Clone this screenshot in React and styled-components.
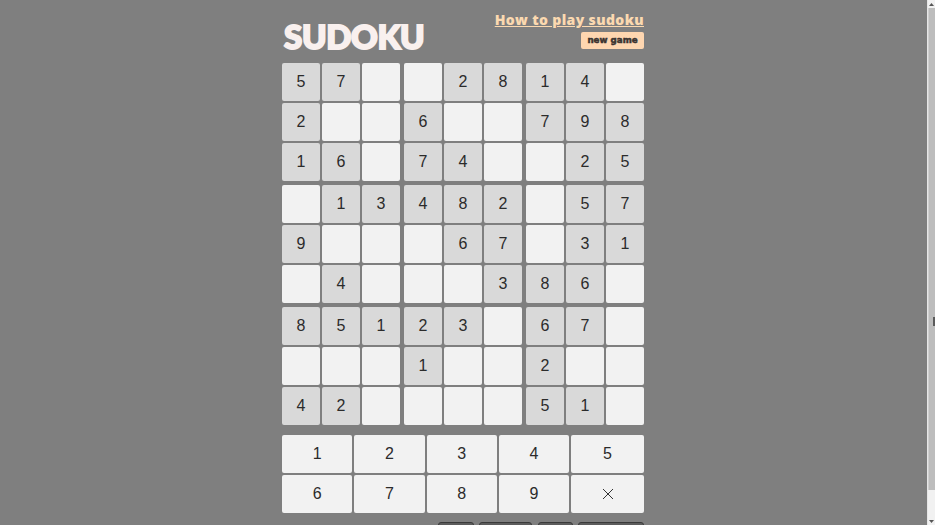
import React from "react";
import styled, { createGlobalStyle } from "styled-components";

const Global = createGlobalStyle`
  html, body { margin: 0; padding: 0; height: 525px; overflow: hidden; background: #7f7f7f; }
  #root { height: 525px; }
`;

const Screen = styled.div`
  display: flex;
  width: 935px;
  height: 525px;
  overflow: hidden;
  background: #7f7f7f;
`;
const Page = styled.main`
  flex: 1;
  display: flex;
  justify-content: center;
  overflow: hidden;
`;
const Column = styled.div`
  width: 362px;
  margin-left: -1px;
  flex-shrink: 0;
`;
const Header = styled.header`
  height: 63px;
  box-sizing: border-box;
  display: flex;
  justify-content: space-between;
  padding-top: 11px;
`;
const Title = styled.h1`
  margin: 10px 0 0 2px;
  font: 900 33px/30px Lato, "Liberation Sans", sans-serif;
  letter-spacing: -0.3px;
  color: #f9f0ee;
  -webkit-text-stroke: 2px #f9f0ee;
`;
const HeaderSide = styled.div`
  display: flex;
  flex-direction: column;
  align-items: flex-end;
  gap: 3px;
`;
const HelpLink = styled.a`
  font: 800 14px/18px "Open Sans", sans-serif;
  letter-spacing: 0.37px;
  color: #fbd9b0;
  text-decoration: underline;
  white-space: nowrap;
`;
const NewGame = styled.button`
  width: 63px;
  height: 17px;
  padding: 0;
  border: 0;
  border-radius: 2px;
  background: #fed6b0;
  color: #3b3330;
  font: 700 8.7px/17px "DejaVu Sans", sans-serif;
  -webkit-text-stroke: 0.5px #3b3330;
`;
const Board = styled.section`
  display: grid;
  grid-template-columns: repeat(3, 118px);
  gap: 4px;
`;
const Box = styled.div`
  display: grid;
  grid-template-columns: repeat(3, 38px);
  grid-auto-rows: 38px;
  gap: 2px;
`;
const Cell = styled.div`
  display: flex;
  align-items: center;
  justify-content: center;
  border-radius: 2px;
  background: ${(p) => (p.$given ? "#d9d9d9" : "#f2f2f2")};
  color: #2b2b2b;
  font: 16px/1 "Liberation Sans", Arial, sans-serif;
`;
const Pad = styled.section`
  margin-top: 10px;
  display: grid;
  grid-template-columns: repeat(4, 70.25px) 1fr;
  grid-auto-rows: 38px;
  gap: 2px;
`;
const PadKey = styled.button`
  display: flex;
  align-items: center;
  justify-content: center;
  padding: 0;
  border: 0;
  border-radius: 2px;
  background: #f2f2f2;
  color: #2b2b2b;
  font: 16px/1 "Liberation Sans", Arial, sans-serif;
`;
const Actions = styled.div`
  margin-top: 9px;
  display: flex;
  justify-content: flex-end;
  gap: 5.5px;
`;
const ActionButton = styled.button`
  width: ${(p) => p.$w}px;
  height: 36px;
  flex-shrink: 0;
  padding: 0;
  border: 1px solid #3a3a3a;
  border-radius: 3px;
  background: #5c5c5c;
`;
const Scrollbar = styled.aside`
  width: 8px;
  flex-shrink: 0;
  box-sizing: border-box;
  border-left: 1px solid #e6e6e6;
  background: #f1f1f1;
  display: flex;
  flex-direction: column;
  position: relative;
`;
const ScrollArrow = styled.div`
  height: 8px;
  flex-shrink: 0;
  display: flex;
  align-items: center;
  justify-content: center;
  svg { display: block; }
`;
const ScrollThumb = styled.div`
  height: 482px;
  background: #bdbdbd;
  border-left: 1px solid #d0d0d0;
`;
const ScrollTrack = styled.div`
  flex: 1;
`;
const ScrollGrip = styled.div`
  position: absolute;
  top: 317px;
  right: 0;
  width: 2px;
  height: 9px;
  background: #5a5a5a;
`;

const boxes = [
  ["57 ", "2  ", "16 "], [" 28", "6  ", "74 "], ["14 ", "798", " 25"],
  [" 13", "9  ", " 4 "], ["482", " 67", "  3"], [" 57", " 31", "86 "],
  ["851", "   ", "42 "], ["23 ", "1  ", "   "], ["67 ", "2  ", "51 "],
];

const CloseGlyph = () => (
  <svg width="12" height="12" viewBox="0 0 12 12" fill="none" stroke="#333" strokeWidth="1">
    <path d="M1 1l10 10M11 1L1 11" />
  </svg>
);

export default function App() {
  return (
    <Screen>
      <Global />
      <Page>
        <Column>
          <Header>
            <Title>SUDOKU</Title>
            <HeaderSide>
              <HelpLink href="#">How to play sudoku</HelpLink>
              <NewGame>new game</NewGame>
            </HeaderSide>
          </Header>
          <Board>
            {boxes.map((rows, b) => (
              <Box key={b}>
                {rows.join("").split("").map((c, i) => (
                  <Cell key={i} $given={c !== " "}>{c.trim()}</Cell>
                ))}
              </Box>
            ))}
          </Board>
          <Pad>
            {[1, 2, 3, 4, 5, 6, 7, 8, 9].map((n) => (
              <PadKey key={n}>{n}</PadKey>
            ))}
            <PadKey aria-label="clear"><CloseGlyph /></PadKey>
          </Pad>
          <Actions>
            <ActionButton $w={36} />
            <ActionButton $w={53} />
            <ActionButton $w={35} />
            <ActionButton $w={66} />
          </Actions>
        </Column>
      </Page>
      <Scrollbar>
        <ScrollArrow>
          <svg width="5" height="3" viewBox="0 0 5 3"><path d="M2.5 0L5 3H0z" fill="#555" /></svg>
        </ScrollArrow>
        <ScrollThumb />
        <ScrollTrack />
        <ScrollArrow>
          <svg width="5" height="3" viewBox="0 0 5 3"><path d="M0 0h5L2.5 3z" fill="#555" /></svg>
        </ScrollArrow>
        <ScrollGrip />
      </Scrollbar>
    </Screen>
  );
}
